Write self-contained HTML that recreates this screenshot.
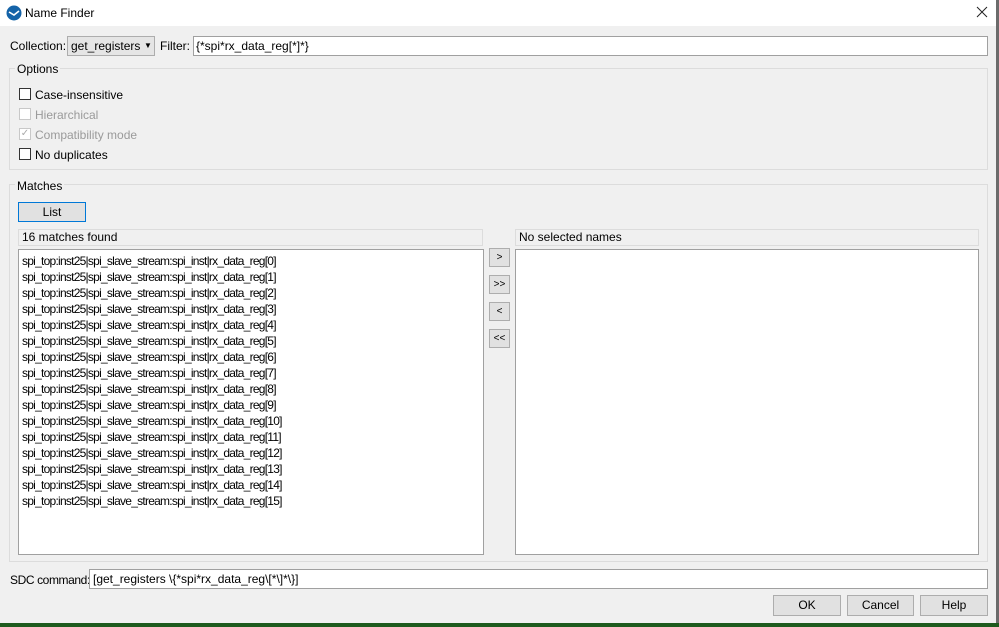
<!DOCTYPE html>
<html><head><style>
*{box-sizing:border-box;margin:0;padding:0}
body{width:999px;height:627px;overflow:hidden;background:#6b6b6b;font-family:"Liberation Sans",sans-serif;font-size:12px;color:#000;position:relative}
.a{position:absolute}
#dlg{left:0;top:0;width:996px;height:623px;background:#f0f0f0}
#tb{left:0;top:0;width:996px;height:26px;background:#fff}
.grp{border:1px solid #dcdcdc}
.in{background:#fff;border:1px solid #a0a0a0}
.btn{background:#e1e1e1;border:1px solid #adadad;text-align:center}
.hdr{background:#f0f0f0;border:1px solid #dcdcdc;padding-left:3px;line-height:15px}
.cb{width:12px;height:12px;border:1px solid #333;background:#fff}
.dis{color:#9a9a9a}
.row{line-height:16px;letter-spacing:-0.75px}
</style></head><body>
<div id="dlg" class="a">
<div id="tb" class="a">
<svg class="a" style="left:6px;top:5px" width="16" height="16" viewBox="0 0 16 16"><circle cx="8" cy="8" r="7.5" fill="#1463a8"/><path d="M3 7 L8 10 L13 6" stroke="#fff" stroke-width="1.6" fill="none"/></svg>
<div class="a" style="left:25px;top:6px;font-size:12px">Name Finder</div>
<svg class="a" style="left:976px;top:6px" width="12" height="12" viewBox="0 0 12 12"><path d="M1 1L11 11M11 1L1 11" stroke="#222" stroke-width="1"/></svg>
</div>
<div class="a" style="left:10px;top:39px">Collection:</div>
<div class="a btn" style="left:67px;top:36px;width:88px;height:20px;text-align:left;padding-left:3px;line-height:18px;background:#e5e5e5">get_registers<span class="a" style="left:76px;top:0;font-size:8px">▼</span></div>
<div class="a" style="left:160px;top:39px">Filter:</div>
<div class="a in" style="left:193px;top:36px;width:795px;height:20px;padding-left:2px;line-height:18px">{*spi*rx_data_reg[*]*}</div>
<div class="a grp" style="left:9px;top:68px;width:979px;height:102px"></div>
<div class="a" style="left:15px;top:62px;background:#f0f0f0;padding:0 2px">Options</div>
<div class="a cb" style="left:19px;top:88px"></div><div class="a" style="left:35px;top:88px">Case-insensitive</div>
<div class="a cb" style="left:19px;top:108px;border-color:#c8c8c8"></div><div class="a dis" style="left:35px;top:108px">Hierarchical</div>
<div class="a cb" style="left:19px;top:128px;border-color:#c8c8c8;color:#aaa;font-size:10px;line-height:10px;text-align:center">✓</div><div class="a dis" style="left:35px;top:128px">Compatibility mode</div>
<div class="a cb" style="left:19px;top:148px"></div><div class="a" style="left:35px;top:148px">No duplicates</div>
<div class="a grp" style="left:9px;top:184px;width:979px;height:378px"></div>
<div class="a" style="left:15px;top:179px;background:#f0f0f0;padding:0 2px">Matches</div>
<div class="a btn" style="left:18px;top:202px;width:68px;height:20px;line-height:18px;border:1px solid #0078d7">List</div>
<div class="a hdr" style="left:18px;top:229px;width:465px;height:17px">16 matches found</div>
<div class="a hdr" style="left:515px;top:229px;width:464px;height:17px">No selected names</div>
<div class="a in" style="left:18px;top:249px;width:466px;height:306px;padding:3px 0 0 3px">
<div class="row">spi_top:inst25|spi_slave_stream:spi_inst|rx_data_reg[0]</div>
<div class="row">spi_top:inst25|spi_slave_stream:spi_inst|rx_data_reg[1]</div>
<div class="row">spi_top:inst25|spi_slave_stream:spi_inst|rx_data_reg[2]</div>
<div class="row">spi_top:inst25|spi_slave_stream:spi_inst|rx_data_reg[3]</div>
<div class="row">spi_top:inst25|spi_slave_stream:spi_inst|rx_data_reg[4]</div>
<div class="row">spi_top:inst25|spi_slave_stream:spi_inst|rx_data_reg[5]</div>
<div class="row">spi_top:inst25|spi_slave_stream:spi_inst|rx_data_reg[6]</div>
<div class="row">spi_top:inst25|spi_slave_stream:spi_inst|rx_data_reg[7]</div>
<div class="row">spi_top:inst25|spi_slave_stream:spi_inst|rx_data_reg[8]</div>
<div class="row">spi_top:inst25|spi_slave_stream:spi_inst|rx_data_reg[9]</div>
<div class="row">spi_top:inst25|spi_slave_stream:spi_inst|rx_data_reg[10]</div>
<div class="row">spi_top:inst25|spi_slave_stream:spi_inst|rx_data_reg[11]</div>
<div class="row">spi_top:inst25|spi_slave_stream:spi_inst|rx_data_reg[12]</div>
<div class="row">spi_top:inst25|spi_slave_stream:spi_inst|rx_data_reg[13]</div>
<div class="row">spi_top:inst25|spi_slave_stream:spi_inst|rx_data_reg[14]</div>
<div class="row">spi_top:inst25|spi_slave_stream:spi_inst|rx_data_reg[15]</div>
</div>
<div class="a in" style="left:515px;top:249px;width:464px;height:306px"></div>
<div class="a btn" style="left:489px;top:248px;width:21px;height:19px;font-size:10px;line-height:17px">&gt;</div>
<div class="a btn" style="left:489px;top:275px;width:21px;height:19px;font-size:10px;line-height:17px">&gt;&gt;</div>
<div class="a btn" style="left:489px;top:302px;width:21px;height:19px;font-size:10px;line-height:17px">&lt;</div>
<div class="a btn" style="left:489px;top:329px;width:21px;height:19px;font-size:10px;line-height:17px">&lt;&lt;</div>
<div class="a" style="left:10px;top:573px;letter-spacing:-0.4px">SDC command:</div>
<div class="a in" style="left:89px;top:569px;width:899px;height:20px;padding-left:3px;line-height:18px">[get_registers \{*spi*rx_data_reg\[*\]*\}]</div>
<div class="a btn" style="left:773px;top:595px;width:68px;height:21px;line-height:19px">OK</div>
<div class="a btn" style="left:847px;top:595px;width:67px;height:21px;line-height:19px">Cancel</div>
<div class="a btn" style="left:920px;top:595px;width:68px;height:21px;line-height:19px">Help</div>
</div>
<div class="a" style="left:0;top:623px;width:999px;height:4px;background:#1d5a1d"></div>
</body></html>
